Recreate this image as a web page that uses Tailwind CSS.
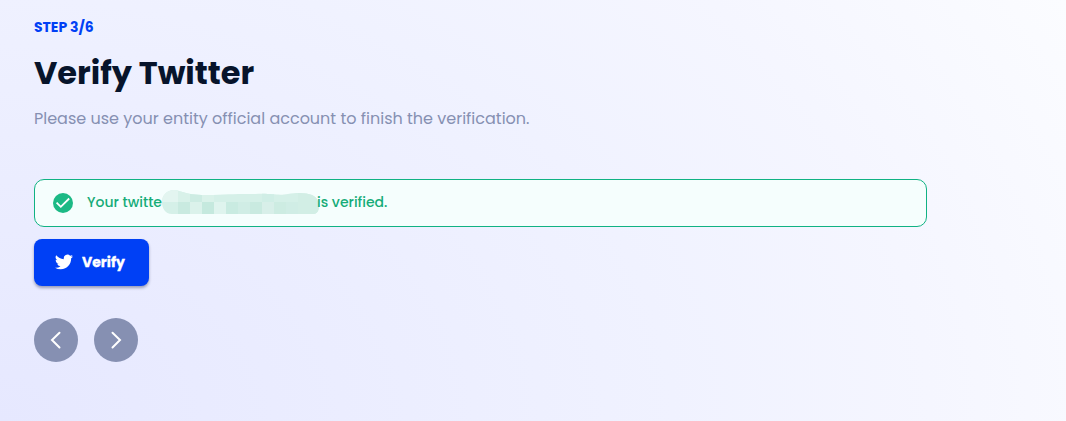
<!DOCTYPE html>
<html lang="en">
<head>
<meta charset="utf-8">
<title>Verify Twitter</title>
<script src="https://cdn.jsdelivr.net/npm/@tailwindcss/browser@4"></script>
</head>
<body class="h-[421px] overflow-hidden bg-[radial-gradient(1223px_856px_at_0_421px,#e6e8ff_0%,#ebedff_28%,#f0f2ff_55%,#f5f6ff_76%,#f8f9ff_88%,#fbfcff_100%)] font-[Poppins,Inter,sans-serif]">
<main class="flex flex-col items-start pl-[34px] pt-4 whitespace-nowrap">
  <p class="h-[22px] text-sm leading-[22px] font-bold tracking-[-0.02px] text-[#0040f5]">STEP 3/6</p>
  <h1 class="mt-[11px] h-12 text-[32px] leading-[48px] font-bold text-[#07142b]">Verify Twitter</h1>
  <p class="mt-[10px] h-6 text-base leading-6 text-[#8690b2]">Please use your entity official account to finish the verification.</p>
  <div class="mt-12 flex h-12 w-[893px] items-center rounded-[10px] border border-[#10b283] bg-[#f5fefd] pl-[18px] text-sm leading-5 font-medium text-[#16ac78]">
    <svg class="size-5" viewBox="0 0 20 20"><circle cx="10" cy="10" r="10" fill="#1cb985"/><path d="M3.6 9.6 7.8 13.8 16.2 5.5" fill="none" stroke="#fff" stroke-width="1.8"/></svg>
    <span class="ml-[14px] w-[75px] -translate-y-px">Your twitte</span>
    <svg class="h-6 w-[158px] -translate-x-px -translate-y-px" viewBox="0 0 158 24">
      <clipPath id="m"><path d="M13 0C17 0 20 2 25 3C34 5 40 5 52 5C66 4 78 4 94 4C112 3 116 6 127 4C137 2 146 3 151 5C156 7 158 12 158 17C158 20 156 24 153 24H11C4 24 1 18 1 12C1 5 6 0 13 0Z"/></clipPath>
      <g clip-path="url(#m)" shape-rendering="crispEdges">
        <rect width="158" height="24" fill="#d5f0e8"/>
        <path fill="#e3f5f0" d="M0 0h17v12H0z"/><path fill="#d8f1e9" d="M17 0h12v12H17z"/><path fill="#cdece3" d="M29 0h12v12H29z"/>
        <path fill="#daf2ea" d="M41 0h12v12H41z"/><path fill="#c9eae0" d="M17 12h12v12H17zM89 12h12v12H89z"/>
        <path fill="#dbf2eb" d="M29 12h12v12H29z"/><path fill="#c5e9de" d="M41 12h12v12H41z"/><path fill="#dff4ee" d="M53 12h12v12H53z"/>
        <path fill="#c9ebe1" d="M65 12h12v12H65z"/><path fill="#d0ede5" d="M77 12h12v12H77zM125 12h12v12h-12z"/>
        <path fill="#d0eee6" d="M101 0h12v12h-12z"/><path fill="#d8efe9" d="M101 12h12v12h-12z"/><path fill="#cdece2" d="M113 12h12v12h-12z"/>
        <path fill="#d2eee5" d="M137 0h22v24h-22z"/>
      </g>
    </svg>
    <span class="-ml-[3px] -translate-y-px">is verified.</span>
  </div>
  <button class="mt-3 flex h-[47px] w-[115px] items-center rounded-lg bg-[#0040f5] pb-px pl-[21px] text-sm font-bold text-white shadow-[0_2px_3px_rgba(20,30,70,0.38)]">
    <svg class="size-[18px]" viewBox="0 0 24 24" fill="#fff"><path d="M23.95 4.57a10 10 0 0 1-2.82.77 4.96 4.96 0 0 0 2.16-2.72c-.95.55-2 .95-3.13 1.18a4.92 4.92 0 0 0-8.38 4.48C7.69 8.1 4.07 6.13 1.64 3.16a4.92 4.92 0 0 0 1.52 6.57 4.9 4.9 0 0 1-2.23-.61v.06a4.92 4.92 0 0 0 3.95 4.83 5 5 0 0 1-2.21.08 4.94 4.94 0 0 0 4.6 3.42A9.87 9.87 0 0 1 0 19.54a14 14 0 0 0 7.55 2.21c9.05 0 14-7.5 14-13.98 0-.21 0-.42-.02-.63A9.94 9.94 0 0 0 24 4.59z"/></svg>
    <span class="ml-[9px] [-webkit-text-stroke:0.3px_#fff]">Verify</span>
  </button>
  <div class="mt-8 flex gap-4">
    <button class="size-11 rounded-full bg-[#8690b2]" aria-label="Previous"><svg class="size-11" viewBox="0 0 44 44" fill="none" stroke="#fff" stroke-width="2" stroke-linecap="round"><path d="M25.5 14.8 18 22l7.5 7.5"/></svg></button>
    <button class="size-11 rounded-full bg-[#8690b2]" aria-label="Next"><svg class="size-11" viewBox="0 0 44 44" fill="none" stroke="#fff" stroke-width="2" stroke-linecap="round"><path d="M18.5 14.8 26 22l-7.5 7.5"/></svg></button>
  </div>
</main>
</body>
</html>
